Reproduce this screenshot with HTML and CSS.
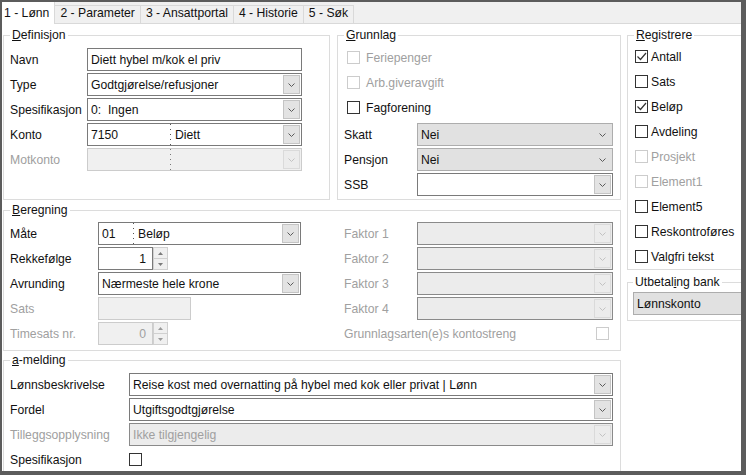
FILE: index.html
```html
<!DOCTYPE html>
<html lang="no">

<head>
    <meta charset="UTF-8">
    <meta name="viewport" content="width=device-width, initial-scale=1.0">
    <title>Lønnsart</title>
    <link rel="stylesheet" href="styles.css">
</head>

<body>
    <div class="window">
        <div class="tabs">
            <div class="tab active">1 - Lønn</div>
            <div class="tab">2 - Parameter</div>
            <div class="tab">3 - Ansattportal</div>
            <div class="tab">4 - Historie</div>
            <div class="tab">5 - Søk</div>
        </div>

        <div class="page">
            <!-- Definisjon -->
            <fieldset class="group definisjon">
                <legend><u>D</u>efinisjon</legend>
                <div class="rows">
                    <div class="row"><span class="lbl">Navn</span>
                        <div class="edit">Diett hybel m/kok el priv</div>
                    </div>
                    <div class="row"><span class="lbl">Type</span>
                        <div class="combo"><span class="val">Godtgjørelse/refusjoner</span>
                            <span class="btn"><svg class="chev" width="7" height="4" viewBox="0 0 7 4"><path d="M0.5 0.5l3 3 3-3" /></svg></span>
                        </div>
                    </div>
                    <div class="row"><span class="lbl">Spesifikasjon</span>
                        <div class="combo"><span class="val">0:&nbsp; Ingen</span>
                            <span class="btn"><svg class="chev" width="7" height="4" viewBox="0 0 7 4"><path d="M0.5 0.5l3 3 3-3" /></svg></span>
                        </div>
                    </div>
                    <div class="row"><span class="lbl">Konto</span>
                        <div class="combo"><span class="part">7150</span><span class="val">Diett</span>
                            <span class="btn"><svg class="chev" width="7" height="4" viewBox="0 0 7 4"><path d="M0.5 0.5l3 3 3-3" /></svg></span>
                        </div>
                    </div>
                    <div class="row off"><span class="lbl">Motkonto</span>
                        <div class="combo light"><span class="part"></span><span class="val"></span>
                            <span class="btn"><svg class="chev" width="7" height="4" viewBox="0 0 7 4"><path d="M0.5 0.5l3 3 3-3" /></svg></span>
                        </div>
                    </div>
                </div>
            </fieldset>

            <!-- Grunnlag -->
            <fieldset class="group grunnlag">
                <legend><u>G</u>runnlag</legend>
                <div class="check off"><span class="cb"></span>Feriepenger</div>
                <div class="check off"><span class="cb"></span>Arb.giveravgift</div>
                <div class="check"><span class="cb"></span>Fagforening</div>
                <div class="rows">
                    <div class="row"><span class="lbl">Skatt</span>
                        <div class="combo flat"><span class="val">Nei</span>
                            <svg class="chev" width="7" height="4" viewBox="0 0 7 4"><path d="M0.5 0.5l3 3 3-3" /></svg>
                        </div>
                    </div>
                    <div class="row"><span class="lbl">Pensjon</span>
                        <div class="combo flat"><span class="val">Nei</span>
                            <svg class="chev" width="7" height="4" viewBox="0 0 7 4"><path d="M0.5 0.5l3 3 3-3" /></svg>
                        </div>
                    </div>
                    <div class="row"><span class="lbl">SSB</span>
                        <div class="combo"><span class="val"></span>
                            <span class="btn"><svg class="chev" width="7" height="4" viewBox="0 0 7 4"><path d="M0.5 0.5l3 3 3-3" /></svg></span>
                        </div>
                    </div>
                </div>
            </fieldset>

            <!-- Høyre kolonne -->
            <div class="side">
                <fieldset class="group registrere">
                    <legend><u>R</u>egistrere</legend>
                    <div class="check"><span class="cb on"><svg width="11" height="11" viewBox="0 0 11 11"><path d="M1.5 5.5l3 3 5.5-6.5" /></svg></span>Antall</div>
                    <div class="check"><span class="cb"></span>Sats</div>
                    <div class="check"><span class="cb on"><svg width="11" height="11" viewBox="0 0 11 11"><path d="M1.5 5.5l3 3 5.5-6.5" /></svg></span>Beløp</div>
                    <div class="check"><span class="cb"></span>Avdeling</div>
                    <div class="check off"><span class="cb"></span>Prosjekt</div>
                    <div class="check off"><span class="cb"></span>Element1</div>
                    <div class="check"><span class="cb"></span>Element5</div>
                    <div class="check"><span class="cb"></span>Reskontroføres</div>
                    <div class="check"><span class="cb"></span>Valgfri tekst</div>
                </fieldset>
                <fieldset class="group bank">
                    <legend>Utbetal<u>i</u>ng bank</legend>
                    <div class="combo flat"><span class="val">Lønnskonto</span></div>
                </fieldset>
            </div>

            <!-- Beregning -->
            <fieldset class="group beregning">
                <legend><u>B</u>eregning</legend>
                <div class="calc">
                    <div class="rows">
                        <div class="row"><span class="lbl">Måte</span>
                            <div class="combo"><span class="part short">01</span><span class="val">Beløp</span>
                                <span class="btn"><svg class="chev" width="7" height="4" viewBox="0 0 7 4"><path d="M0.5 0.5l3 3 3-3" /></svg></span>
                            </div>
                        </div>
                        <div class="row"><span class="lbl">Rekkefølge</span>
                            <div class="spin">
                                <div class="edit num">1</div>
                                <div class="arrows">
                                    <span><svg width="5" height="3" viewBox="0 0 5 3"><path d="M0 3h5L2.5 0z" /></svg></span>
                                    <span><svg width="5" height="3" viewBox="0 0 5 3"><path d="M0 0h5L2.5 3z" /></svg></span>
                                </div>
                            </div>
                        </div>
                        <div class="row"><span class="lbl">Avrunding</span>
                            <div class="combo"><span class="val">Nærmeste hele krone</span>
                                <span class="btn"><svg class="chev" width="7" height="4" viewBox="0 0 7 4"><path d="M0.5 0.5l3 3 3-3" /></svg></span>
                            </div>
                        </div>
                        <div class="row off"><span class="lbl">Sats</span>
                            <div class="edit sats"></div>
                        </div>
                        <div class="row off"><span class="lbl">Timesats nr.</span>
                            <div class="spin">
                                <div class="edit num">0</div>
                                <div class="arrows">
                                    <span><svg width="5" height="3" viewBox="0 0 5 3"><path d="M0 3h5L2.5 0z" /></svg></span>
                                    <span><svg width="5" height="3" viewBox="0 0 5 3"><path d="M0 0h5L2.5 3z" /></svg></span>
                                </div>
                            </div>
                        </div>
                    </div>

                    <div class="rows">
                        <div class="row off"><span class="lbl">Faktor 1</span>
                            <div class="combo grey"><span class="val"></span>
                                <span class="btn"><svg class="chev" width="7" height="4" viewBox="0 0 7 4"><path d="M0.5 0.5l3 3 3-3" /></svg></span>
                            </div>
                        </div>
                        <div class="row off"><span class="lbl">Faktor 2</span>
                            <div class="combo grey"><span class="val"></span>
                                <span class="btn"><svg class="chev" width="7" height="4" viewBox="0 0 7 4"><path d="M0.5 0.5l3 3 3-3" /></svg></span>
                            </div>
                        </div>
                        <div class="row off"><span class="lbl">Faktor 3</span>
                            <div class="combo grey"><span class="val"></span>
                                <span class="btn"><svg class="chev" width="7" height="4" viewBox="0 0 7 4"><path d="M0.5 0.5l3 3 3-3" /></svg></span>
                            </div>
                        </div>
                        <div class="row off"><span class="lbl">Faktor 4</span>
                            <div class="combo grey"><span class="val"></span>
                                <span class="btn"><svg class="chev" width="7" height="4" viewBox="0 0 7 4"><path d="M0.5 0.5l3 3 3-3" /></svg></span>
                            </div>
                        </div>
                        <div class="row off spread"><span>Grunnlagsarten(e)s kontostreng</span><span class="cb"></span></div>
                    </div>
                </div>
            </fieldset>

            <!-- a-melding -->
            <fieldset class="group amelding">
                <legend><u>a</u>-melding</legend>
                <div class="rows">
                    <div class="row"><span class="lbl">Lønnsbeskrivelse</span>
                        <div class="combo"><span class="val">Reise kost med overnatting på hybel med kok eller privat | Lønn</span>
                            <span class="btn"><svg class="chev" width="7" height="4" viewBox="0 0 7 4"><path d="M0.5 0.5l3 3 3-3" /></svg></span>
                        </div>
                    </div>
                    <div class="row"><span class="lbl">Fordel</span>
                        <div class="combo"><span class="val">Utgiftsgodtgjørelse</span>
                            <span class="btn"><svg class="chev" width="7" height="4" viewBox="0 0 7 4"><path d="M0.5 0.5l3 3 3-3" /></svg></span>
                        </div>
                    </div>
                    <div class="row off"><span class="lbl">Tilleggsopplysning</span>
                        <div class="combo grey"><span class="val">Ikke tilgjengelig</span>
                            <span class="btn"><svg class="chev" width="7" height="4" viewBox="0 0 7 4"><path d="M0.5 0.5l3 3 3-3" /></svg></span>
                        </div>
                    </div>
                    <div class="row"><span class="lbl">Spesifikasjon</span><span class="cb"></span></div>
                </div>
            </fieldset>
        </div>
    </div>
</body>

</html>
```

FILE: styles.css
```css
* {
    margin: 0;
    padding: 0;
    box-sizing: border-box;
}

body {
    height: 100vh;
    overflow: hidden;
    background-color: #5c5c5c;
    font-family: "Liberation Sans", Arial, sans-serif;
    font-size: 12.2px;
    color: #111;
}

.window {
    margin: 2px 5px 0 2px;
    height: 469px;
    background-color: #fff;
    overflow: hidden;
}

/* faner */
.tabs {
    display: flex;
    align-items: flex-end;
    height: 22px;
    background-color: #f0f0f0;
    border-bottom: 1px solid #d9d9d9;
}

.tab {
    height: 18px;
    line-height: 15px;
    padding: 0 5px;
    background-color: #f0f0f0;
    border: 1px solid #d9d9d9;
    border-left: none;
    border-bottom: none;
    white-space: nowrap;
}

.tab.active {
    height: 22px;
    line-height: 22px;
    margin-bottom: -1px;
    padding: 0 5px 0 2px;
    background-color: #fff;
    border-top: none;
}

/* side */
.page {
    display: grid;
    grid-template-columns: 327px 285px 160px;
    column-gap: 6px;
    row-gap: 3px;
    padding: 4px 0 0 1px;
}

.group {
    border: 1px solid #dcdcdc;
    padding: 0 6px;
    min-width: 0;
}

.group legend {
    padding: 0 2px;
    line-height: 14px;
}

.definisjon {
    padding-top: 6px;
}

.grunnlag {
    margin-left: 1px;
    padding-top: 3px;
    padding-bottom: 3px;
}

.side {
    grid-column: 3;
    grid-row: 1 / span 3;
    align-self: start;
}

.registrere {
    padding-top: 2px;
}

.bank {
    margin-top: 5px;
    padding: 3px 0 5px 5px;
}

.beregning {
    grid-column: 1 / span 2;
    padding-top: 5px;
    padding-bottom: 5px;
}

.amelding {
    grid-column: 1 / span 2;
    margin-top: -1px;
    padding-top: 6px;
    height: 130px;
}

.calc {
    display: grid;
    grid-template-columns: 334px 1fr;
}

/* rader */
.rows {
    display: flex;
    flex-direction: column;
    gap: 2px;
}

.row {
    display: flex;
    align-items: center;
    height: 23px;
}

.lbl {
    flex: none;
    white-space: nowrap;
}

.definisjon .lbl {
    width: 77px;
}

.grunnlag .lbl {
    width: 73px;
}

.beregning .lbl {
    width: 88px;
}

.beregning .rows+.rows .lbl {
    width: 73px;
}

.amelding .lbl {
    width: 119px;
}

.grunnlag .rows {
    margin-top: 3px;
}

.off {
    color: #a0a0a0;
}

.spread {
    justify-content: space-between;
    padding-right: 5px;
}

/* felt */
.edit,
.combo {
    display: flex;
    align-items: center;
    height: 23px;
    padding-left: 3px;
    border: 1px solid #7a7a7a;
    background-color: #fff;
    white-space: nowrap;
    overflow: hidden;
}

.definisjon .edit,
.definisjon .combo {
    width: 215px;
}

.grunnlag .combo,
.beregning .rows+.rows .combo {
    width: 196px;
}

.beregning .combo {
    width: 203px;
}

.amelding .combo {
    width: 484px;
}

.val {
    flex: 1;
    overflow: hidden;
}

.part {
    align-self: stretch;
    display: flex;
    align-items: center;
    width: 80px;
    margin-right: 4px;
    background-image: repeating-linear-gradient(#555 0 1px, transparent 1px 5px);
    background-size: 1px 100%;
    background-repeat: no-repeat;
    background-position: right top;
}

.part.short {
    width: 32px;
}

.btn {
    display: flex;
    align-items: center;
    justify-content: center;
    flex: none;
    width: 17px;
    height: 19px;
    margin-right: 1px;
    background-color: #e3e3e3;
    border: 1px solid #c4c4c4;
}

.chev {
    fill: none;
    stroke: #5a5a5a;
}

.combo.flat {
    background-color: #e1e1e1;
    border-color: #adadad;
    padding-right: 6px;
}

.bank .combo.flat {
    width: 130px;
}

.combo.light {
    background-color: #f0f0f0;
    border-color: #cccccc;
}

.combo.light .part {
    background-image: repeating-linear-gradient(#777 0 1px, transparent 1px 5px);
}

.combo.grey {
    background-color: #ececec;
    border-color: #8a8a8a;
}

.combo.light .btn,
.combo.grey .btn {
    background-color: #ececec;
    border-color: #dadada;
}

.combo.light .chev,
.combo.grey .chev {
    stroke: #c2c2c2;
}

.edit.sats {
    width: 93px;
    background-color: #f0f0f0;
    border-color: #cccccc;
}

/* tallfelt med piler */
.spin {
    display: flex;
    height: 23px;
}

.edit.num {
    width: 55px;
    justify-content: flex-end;
    padding-right: 6px;
}

.arrows {
    display: flex;
    flex-direction: column;
    width: 15px;
}

.arrows span {
    flex: 1;
    display: flex;
    align-items: center;
    justify-content: center;
    background-color: #f0f0f0;
    border: 1px solid #d0d0d0;
}

.arrows span+span {
    border-top: none;
}

.arrows svg {
    fill: #7a7a7a;
}

.off .edit.num {
    background-color: #f0f0f0;
    border-color: #cccccc;
}

.off .arrows svg {
    fill: #9a9a9a;
}

/* avkrysning */
.check {
    display: flex;
    align-items: center;
    height: 25px;
    white-space: nowrap;
}

.cb {
    display: flex;
    flex: none;
    width: 13px;
    height: 13px;
    border: 1px solid #333;
    background-color: #fff;
}

.cb svg {
    fill: none;
    stroke: #333;
    stroke-width: 1.2;
}

.off .cb {
    border-color: #cccccc;
}

.grunnlag .cb {
    margin: 0 6px 0 3px;
}

.registrere .cb {
    margin: 0 3px 0 1px;
}
```
